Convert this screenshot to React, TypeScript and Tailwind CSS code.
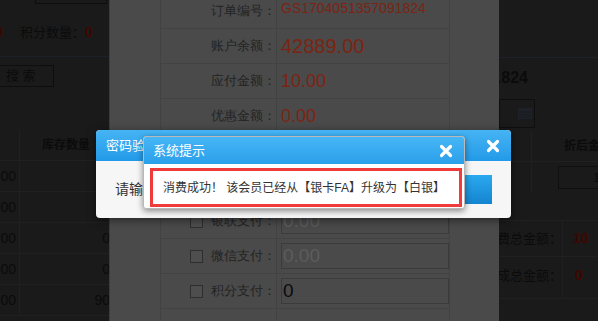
import type { ReactNode } from 'react';

const cjk = "font-['Liberation_Sans','Noto_Sans_CJK_SC',sans-serif]";

function CloseIcon() {
  return (
    <svg width="14" height="14" viewBox="0 0 14 14" fill="none">
      <path d="M2.5 2.5 L11.5 11.5 M11.5 2.5 L2.5 11.5" stroke="#ffffff" strokeWidth="3.2" strokeLinecap="round" />
    </svg>
  );
}

function Calendar() {
  return (
    <svg width="14" height="11" viewBox="0 0 14 11" fill="none">
      <rect x="0.5" y="0.5" width="13" height="10" fill="#191b20" stroke="#1f2228" />
      <rect x="0.5" y="0.5" width="13" height="2.5" fill="#1f2228" />
      <path d="M1 5.5 H13 M1 8 H13 M4 3 V10 M7 3 V10 M10 3 V10" stroke="#202329" strokeWidth="0.8" />
    </svg>
  );
}

function Check() {
  return <span className="w-[13px] h-[13px] border border-[#2e2e2e] bg-[#4e4e4e] mr-[8px] shrink-0" />;
}

function Row({ label, check, children, valueClass = '' }: { label: string; check?: boolean; children?: ReactNode; valueClass?: string }) {
  return (
    <div className="grid grid-cols-[112px_1fr] h-[35px] border-b border-[#424242]">
      <div className="flex items-center justify-end border-r border-[#424242] mr-[-4px] text-[13px] text-[#232323] whitespace-nowrap">
        {check && <Check />}
        {label}
      </div>
      <div className={`flex items-center pl-[8px] ${valueClass}`}>{children}</div>
    </div>
  );
}

function PayInput({ value, dark }: { value: string; dark?: boolean }) {
  return (
    <div className={`w-[168px] h-[26px] border border-[#3b3b3b] flex items-center pl-[1px] text-[19px] font-['Liberation_Sans',sans-serif] ${dark ? 'text-[#0b0b0b]' : 'text-[#5c5c5c]'}`}>
      {value}
    </div>
  );
}

export default function App() {
  return (
    <div className={`relative w-[598px] h-[321px] overflow-hidden bg-[#1a1a1a] ${cjk}`}>
      {/* dimmed page underneath */}
      <div className="flex h-full">
        {/* left part */}
        <div className="w-[110px] shrink-0">
          <div className="ml-[35px] w-[72px] h-[4px] border-x border-b border-[#0e0e0e]" />
          <div className="h-[53px] flex items-center pt-[5px] text-[13px] text-[#0b0b0b] border-b border-[#1d212b] whitespace-nowrap">
            <span className="ml-[-5px] w-[25px] text-[14px] font-bold text-[#3f0700]">0</span>
            <span>积分数量：</span>
            <span className="text-[14px] font-bold text-[#3f0700]">0</span>
          </div>
          <div className="mt-[8px] ml-[-4px] w-[58px] h-[22px] border border-[#0e0e0e] flex items-center pl-[9px] text-[13px] text-[#0b0b0b]">
            搜 索
          </div>
          <div className="mt-[43px]">
            <div className="h-[31px] flex border-b border-[#202020]">
              <div className="w-[20px] shrink-0 border-r border-[#202020]" />
              <div className="flex-1 flex items-center pl-[22px] text-[12px] font-bold text-[#0b0b0b] whitespace-nowrap">库存数量</div>
            </div>
            {['0', '0', '0', '0', '90'].map((n, i) => (
              <div key={i} className="h-[31px] flex border-b border-[#202020] text-[14px] text-[#0b0b0b] font-['Liberation_Sans',sans-serif]">
                <div className="w-[20px] shrink-0 flex items-center justify-end pr-[3px] border-r border-[#202020] whitespace-nowrap">10.00</div>
                <div className="flex-1 flex items-center justify-end">{n}</div>
              </div>
            ))}
          </div>
        </div>
        <div className="flex-1" />
        {/* right part */}
        <div className="w-[99px] shrink-0 overflow-hidden">
          <div className="h-[58px] border-b border-[#1d212b]" />
          <div className="h-[40px] flex items-center">
            <div className="w-[29px] flex justify-end shrink-0 whitespace-nowrap text-[16px] font-bold text-[#0b0b0b] font-['Liberation_Sans',sans-serif]">
              .824
            </div>
          </div>
          <div className="w-[36px] h-[29px] border border-[#0f0f0f] flex items-center justify-end pr-[2px] mt-[1px]">
            <Calendar />
          </div>
          <div className="mt-[3px] h-[31px] flex border-b border-[#202020]">
            <div className="w-[33px] shrink-0 border-r border-[#202020]" />
            <div className="flex items-center pl-[32px] text-[12px] font-bold text-[#0b0b0b] whitespace-nowrap">折后金额</div>
          </div>
          <div className="h-[31px] flex">
            <div className="w-[33px] shrink-0 border-r border-[#202020]" />
            <div className="flex items-center pl-[26px]">
              <div className="w-[50px] shrink-0 h-[23px] border border-[#0f0f0f] flex items-center pl-[34px] text-[13px] text-[#0b0b0b]">10</div>
            </div>
          </div>
          <div className="h-[28px] border-b border-[#202020]" />
          <div className="h-[36px] flex border-b border-[#202020]">
            <div className="w-[64px] shrink-0 flex items-center justify-end border-r border-[#202020] whitespace-nowrap text-[13px] text-[#0b0b0b]">消费总金额：</div>
            <div className="flex items-center pl-[10px] text-[14px] font-bold text-[#3f0700]">10</div>
          </div>
          <div className="h-[42px] flex border-b border-[#202020]">
            <div className="w-[64px] shrink-0 flex items-center justify-end pb-[4px] border-r border-[#202020] whitespace-nowrap text-[13px] text-[#0b0b0b]">提成总金额：</div>
            <div className="flex items-center pl-[12px] pb-[4px] text-[14px] font-bold text-[#3f0700]">0</div>
          </div>
        </div>
      </div>

      {/* checkout panel (dimmed) */}
      <div className="absolute left-[109px] top-0 w-[390px] h-full bg-[#4a4a4a] border-l border-[#3c3c3c] overflow-hidden">
        <div className="ml-[50px] w-[290px] mt-[-6px] border-x border-[#424242] font-['Liberation_Sans',sans-serif]">
          <Row label="订单编号：" valueClass="pb-[6px]">
            <span className="text-[14px] text-[#7c2413]">GS1704051357091824</span>
          </Row>
          <Row label="账户余额：">
            <span className="text-[20px] text-[#7c2413]">42889.00</span>
          </Row>
          <Row label="应付金额：">
            <span className="text-[18px] text-[#7c2413]">10.00</span>
          </Row>
          <Row label="优惠金额：">
            <span className="text-[18px] text-[#7c2413]">0.00</span>
          </Row>
          <Row label="现金支付：" check>
            <PayInput value="10.00" dark />
          </Row>
          <Row label="刷卡支付：" check>
            <PayInput value="0.00" />
          </Row>
          <Row label="银联支付：" check>
            <PayInput value="0.00" />
          </Row>
          <Row label="微信支付：" check>
            <PayInput value="0.00" />
          </Row>
          <Row label="积分支付：" check>
            <PayInput value="0" dark />
          </Row>
          <Row label="" valueClass="pt-[8px]">
            <span className="text-[18px] text-[#7c2413]">10.00</span>
          </Row>
        </div>
      </div>

      {/* password dialog */}
      <div className="absolute left-[96px] top-[130px] w-[415px] h-[88px] rounded-[4px] bg-[#f6f6f6] shadow-[0_2px_8px_rgba(0,0,0,0.5)] overflow-hidden">
        <div className="h-[31px] flex items-center justify-between pl-[10px] pr-[11px] bg-linear-to-b from-[#45b4f4] to-[#229ae8]">
          <span className="text-[13px] text-white">密码验证</span>
          <CloseIcon />
        </div>
        <div className="h-[57px] flex items-center pl-[19px] pr-[19px]">
          <span className="text-[14px] text-[#333]">请输入密码：</span>
          <div className="ml-[6px] w-[220px] h-[29px] border border-[#cccccc] bg-white" />
          <div className="ml-auto w-[60px] h-[29px] bg-linear-to-b from-[#2aa8f0] to-[#1485d0]" />
        </div>
      </div>

      {/* system message dialog */}
      <div className="absolute left-[143px] top-[136px] w-[322px] h-[73px] rounded-[3px] bg-white border border-[#b9b9b9] shadow-[0_2px_6px_rgba(0,0,0,0.45)] overflow-hidden">
        <div className="h-[27px] flex items-center justify-between pl-[9px] pr-[11px] pt-[1px] bg-linear-to-b from-[#46b6f6] to-[#2a9fea]">
          <span className="text-[13px] text-white">系统提示</span>
          <CloseIcon />
        </div>
        <div className="mt-[4px] ml-[6px] w-[312px] h-[39px] border-[3px] border-[#f03b3b] flex items-center pl-[10px] text-[12px] text-[#333] whitespace-nowrap">
          消费成功！ 该会员已经从【银卡FA】升级为【白银】
        </div>
      </div>
    </div>
  );
}
